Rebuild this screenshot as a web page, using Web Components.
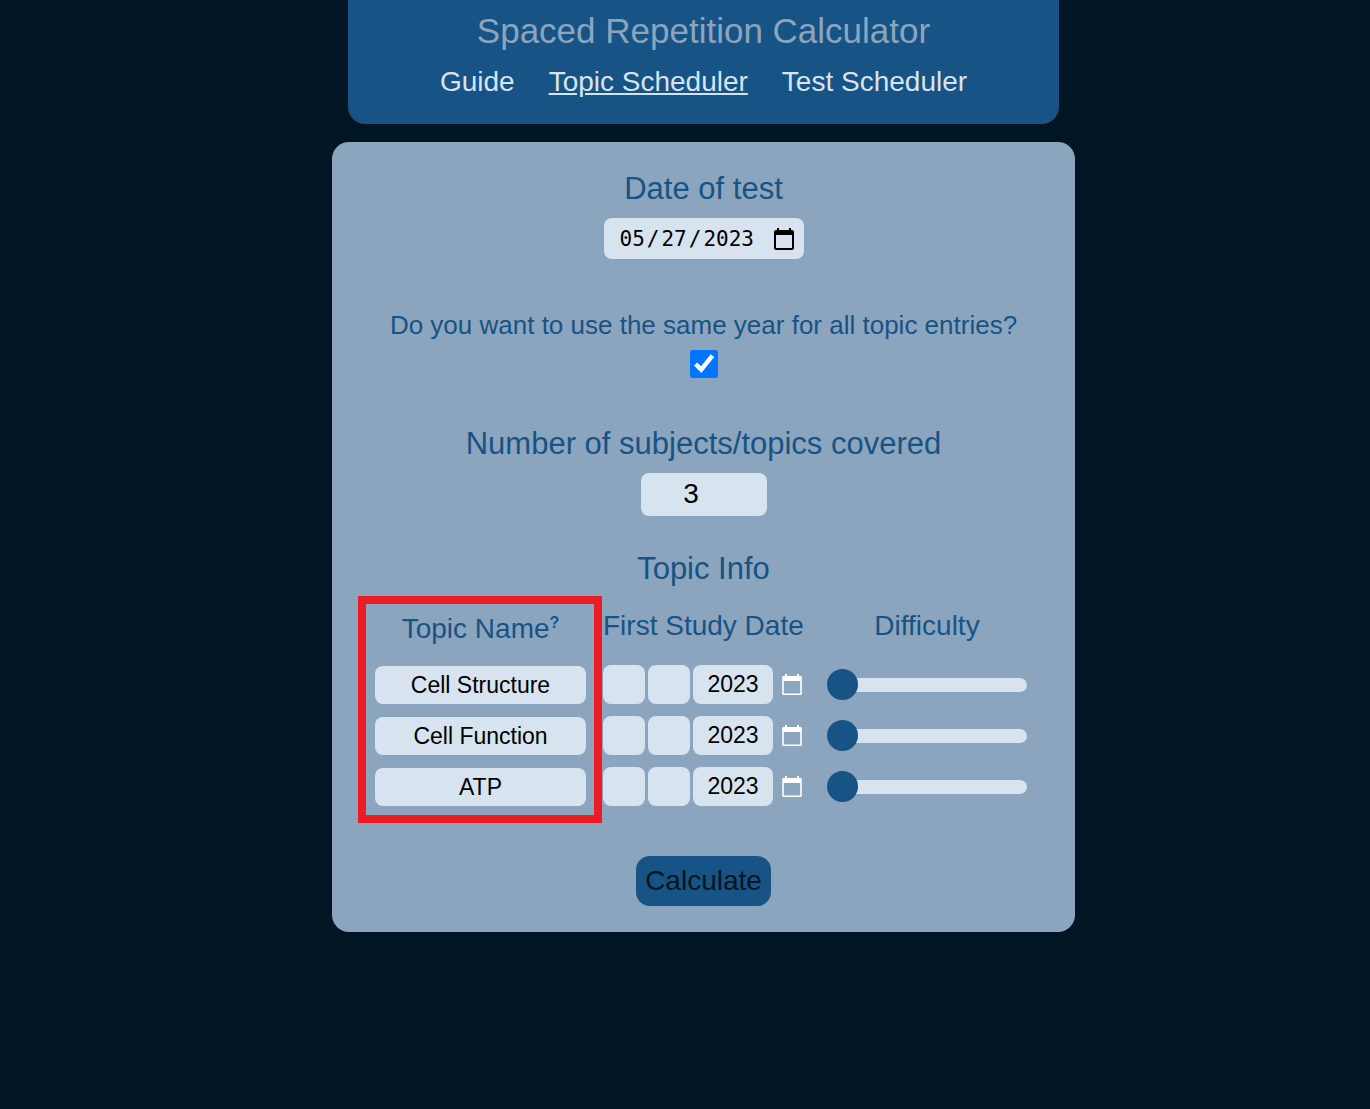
<!DOCTYPE html>
<html lang="en">
<head>
<meta charset="UTF-8">
<meta name="viewport" content="width=device-width, initial-scale=1.0">
<title>Spaced Repetition Calculator</title>
<style>
    :root {
        --night: #001625;
        --deep: #175384;
        --steel: #8ca5bf;
        --mist: #d7e3ef;
        --marker: #ed1c24;
    }

    body {
        margin: 0;
        padding-left: 37px;
        background: var(--night);
        color: var(--deep);
        font-family: "Liberation Sans", Arial, sans-serif;
    }
</style>
</head>
<body>
<site-header heading="Spaced Repetition Calculator">
    <nav-link href="#guide">Guide</nav-link>
    <nav-link href="#topics" current>Topic Scheduler</nav-link>
    <nav-link href="#tests">Test Scheduler</nav-link>
</site-header>
<topic-scheduler>
    <topic-table>
        <topic-row name="Cell Structure" year="2023"></topic-row>
        <topic-row name="Cell Function" year="2023"></topic-row>
        <topic-row name="ATP" year="2023"></topic-row>
    </topic-table>
</topic-scheduler>

<script>
// Bar at the top with the title and the navigation
class SiteHeader extends HTMLElement {
    constructor() {
        super();
        this.attachShadow({ mode: "open" });
        this.shadowRoot.innerHTML = `
            <style>
                :host {
                    display: block;
                    box-sizing: border-box;
                    max-width: 711px;
                    margin: 0 auto 18px;
                    padding: 11px 16px 27px;
                    border-radius: 0 0 17px 17px;
                    background: var(--deep);
                    text-align: center;
                }

                h1 {
                    margin: 0 0 15px;
                    color: var(--steel);
                    font-size: 35px;
                    font-weight: normal;
                    line-height: 40px;
                }

                nav {
                    display: flex;
                    flex-wrap: wrap;
                    justify-content: center;
                    gap: 0 34px;
                }
            </style>
            <h1></h1>
            <nav><slot></slot></nav>
        `;
    }

    connectedCallback() {
        this.shadowRoot.querySelector("h1").textContent = this.getAttribute("heading");
    }
}

class NavLink extends HTMLElement {
    constructor() {
        super();
        this.attachShadow({ mode: "open" });
        this.shadowRoot.innerHTML = `
            <style>
                :host {
                    display: block;
                }

                a {
                    color: var(--mist);
                    font-size: 28px;
                    line-height: 31px;
                    text-decoration: none;
                }

                a:hover, :host([current]) a {
                    text-decoration: underline;
                }
            </style>
            <a><slot></slot></a>
        `;
    }

    connectedCallback() {
        this.shadowRoot.querySelector("a").href = this.getAttribute("href");
    }
}

class TopicScheduler extends HTMLElement {
    constructor() {
        super();
        this.attachShadow({ mode: "open" });
        this.shadowRoot.innerHTML = `
            <style>
                :host {
                    display: block;
                    box-sizing: border-box;
                    max-width: 743px;
                    margin: 0 auto;
                    padding: 29px 43px 26px;
                    border-radius: 17px;
                    background: var(--steel);
                }

                form {
                    display: flex;
                    flex-direction: column;
                    align-items: center;
                }

                .field {
                    display: flex;
                    flex-direction: column;
                    align-items: center;
                    gap: 11px;
                    margin-bottom: 48px;
                    text-align: center;
                }

                .field.tight {
                    margin-bottom: 35px;
                }

                label, h2 {
                    margin: 0;
                    font-size: 31px;
                    font-weight: normal;
                    line-height: 36px;
                }

                .question {
                    padding-top: 4px;
                    font-size: 26px;
                    line-height: 28px;
                }

                input {
                    box-sizing: border-box;
                    margin: 0;
                    border: none;
                    border-radius: 8px;
                    background: var(--mist);
                    color: black;
                    font-family: inherit;
                }

                input[type=date] {
                    width: 200px;
                    height: 41px;
                    padding: 0 8px 0 15px;
                    font-family: "DejaVu Sans Mono", monospace;
                    font-size: 21px;
                }

                input[type=date]::-webkit-datetime-edit-text {
                    padding: 0 1px;
                }

                input[type=date]::-webkit-calendar-picker-indicator {
                    width: 24px;
                    height: 24px;
                    margin: 0;
                    padding: 0;
                    background-size: 24px 24px;
                }

                input[type=checkbox] {
                    width: 28px;
                    height: 28px;
                }

                input[type=number] {
                    width: 126px;
                    height: 43px;
                    padding: 0 12px 2px 2px;
                    font-size: 28px;
                    text-align: center;
                }

                h2 {
                    margin-bottom: 23px;
                }

                button {
                    height: 50px;
                    margin-top: 50px;
                    padding: 0 9px;
                    border: none;
                    border-radius: 14px;
                    background: var(--deep);
                    color: var(--night);
                    font-family: inherit;
                    font-size: 28px;
                }

                ::slotted(topic-table) {
                    align-self: stretch;
                }
            </style>
            <form>
                <div class="field">
                    <label for="test-date">Date of test</label>
                    <input type="date" id="test-date" value="2023-05-27">
                </div>
                <div class="field">
                    <label class="question" for="same-year">Do you want to use the same year for all topic entries?</label>
                    <input type="checkbox" id="same-year" checked>
                </div>
                <div class="field tight">
                    <label for="topic-count">Number of subjects/topics covered</label>
                    <input type="number" id="topic-count" min="1" value="3">
                </div>
                <h2>Topic Info</h2>
                <slot></slot>
                <button type="button">Calculate</button>
            </form>
        `;
    }
}

// Column headings, the rows, and the marker around the first column
class TopicTable extends HTMLElement {
    constructor() {
        super();
        this.attachShadow({ mode: "open" });
        this.shadowRoot.innerHTML = `
            <style>
                :host {
                    display: flex;
                    flex-direction: column;
                    gap: 12px;
                    position: relative;
                    --columns: 211px 200px 200px;
                }

                .head {
                    display: grid;
                    grid-template-columns: var(--columns);
                    column-gap: 17px;
                    height: 43px;
                    font-size: 28px;
                    text-align: center;
                    white-space: nowrap;
                }

                .head span:last-child {
                    margin-left: 7px;
                    margin-right: -7px;
                }

                sup {
                    font-size: 16px;
                    font-weight: bold;
                    line-height: 25px;
                }

                .marker {
                    position: absolute;
                    box-sizing: border-box;
                    top: -14px;
                    bottom: -17px;
                    left: -17px;
                    width: 244px;
                    border: 8px solid var(--marker);
                    pointer-events: none;
                }
            </style>
            <div class="head">
                <span>Topic Name<sup>?</sup></span>
                <span>First Study Date</span>
                <span>Difficulty</span>
            </div>
            <slot></slot>
            <div class="marker"></div>
        `;
    }
}

class TopicRow extends HTMLElement {
    constructor() {
        super();
        this.attachShadow({ mode: "open" });
        this.shadowRoot.innerHTML = `
            <style>
                :host {
                    display: grid;
                    grid-template-columns: var(--columns);
                    column-gap: 17px;
                    align-items: end;
                }

                input {
                    box-sizing: border-box;
                    margin: 0;
                    padding: 0;
                    border: none;
                    border-radius: 8px;
                    background: var(--mist);
                    color: black;
                    font-family: inherit;
                    font-size: 23px;
                    text-align: center;
                }

                .name {
                    width: 100%;
                    height: 38px;
                }

                .date {
                    display: flex;
                    align-items: center;
                    gap: 3px;
                }

                .date input {
                    width: 42px;
                    height: 39px;
                }

                .date .year {
                    width: 80px;
                }

                button {
                    display: flex;
                    margin-left: auto;
                    padding: 0;
                    border: none;
                    background: none;
                }

                input[type=range] {
                    appearance: none;
                    align-self: center;
                    width: 200px;
                    height: 14px;
                    margin-left: 7px;
                    border-radius: 7px;
                }

                input[type=range]::-webkit-slider-thumb {
                    appearance: none;
                    width: 31px;
                    height: 31px;
                    border-radius: 50%;
                    background: var(--deep);
                }
            </style>
            <input class="name" type="text" aria-label="Topic Name">
            <div class="date">
                <input type="text" aria-label="Month">
                <input type="text" aria-label="Day">
                <input class="year" type="text" aria-label="Year">
                <button type="button" aria-label="Pick a date">
                    <svg width="22" height="22" viewBox="0 0 22 22">
                        <path fill="white" fill-rule="evenodd" d="M4 0h2v2h10V0h2v2h1.5a1.3 1.3 0 0 1 1.3 1.3v16.4a1.3 1.3 0 0 1-1.3 1.3H2.5a1.3 1.3 0 0 1-1.3-1.3V3.3A1.3 1.3 0 0 1 2.5 2H4zM2.8 7v12.4h16.4V7z"/>
                    </svg>
                </button>
            </div>
            <input type="range" min="1" max="5" value="1" aria-label="Difficulty">
        `;
    }

    connectedCallback() {
        this.shadowRoot.querySelector(".name").value = this.getAttribute("name");
        this.shadowRoot.querySelector(".year").value = this.getAttribute("year");
    }
}

customElements.define("site-header", SiteHeader);
customElements.define("nav-link", NavLink);
customElements.define("topic-scheduler", TopicScheduler);
customElements.define("topic-table", TopicTable);
customElements.define("topic-row", TopicRow);
</script>
</body>
</html>
